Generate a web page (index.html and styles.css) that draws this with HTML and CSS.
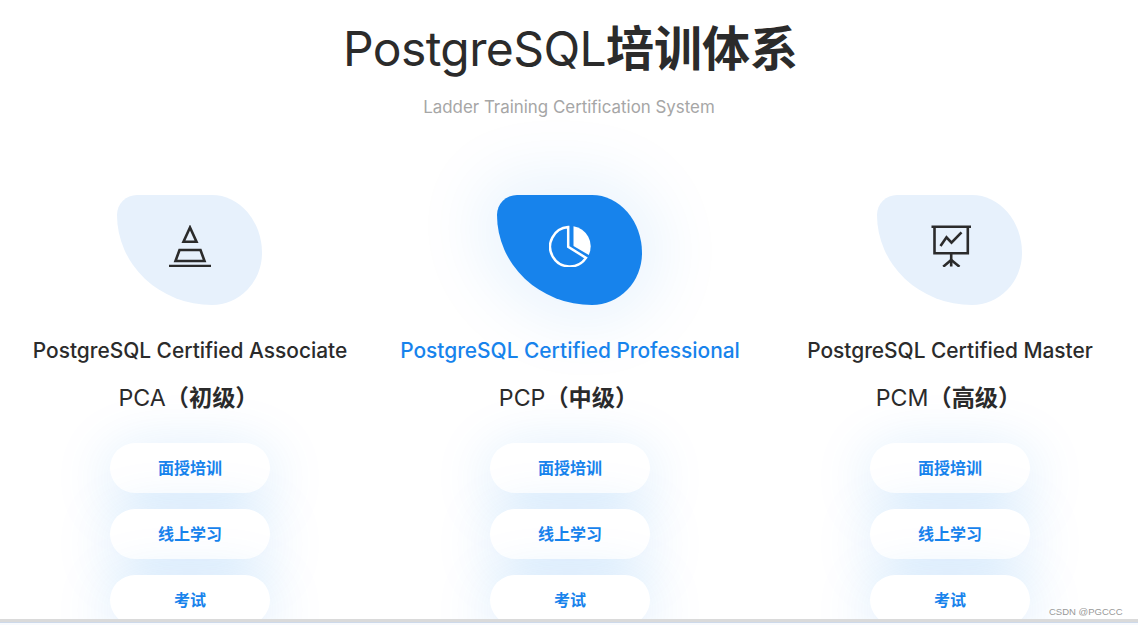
FILE: index.html
```html
<!DOCTYPE html>
<html lang="zh-CN">
<head>
<meta charset="utf-8">
<title>PostgreSQL培训体系</title>
<link rel="stylesheet" href="styles.css">
</head>
<body>
<main class="page">
  <header class="head">
    <h1 class="title"><span class="title-latin">PostgreSQL</span><b>培训体系</b></h1>
    <p class="subtitle">Ladder Training Certification System</p>
  </header>
  <section class="columns">
    <article class="col">
      <div class="blob">
        <svg class="icon" viewBox="0 0 42 42" fill="none" stroke="#2b2b2b" stroke-width="2.600"><path d="M21 2.500 L14.500 16.800 H27.500 Z"/><path d="M10.500 25 H31.500 L35.500 36 H6.500 Z"/><path d="M0 41 H42"/></svg>
      </div>
      <h2 class="name">PostgreSQL Certified Associate</h2>
      <h3 class="level">PCA<b>（初级）</b></h3>
      <div class="pills"><a class="pill">面授培训</a><a class="pill">线上学习</a><a class="pill">考试</a></div>
    </article>
    <article class="col active">
      <div class="blob">
        <svg class="icon" viewBox="0 0 42 42" fill="none" stroke="#fff" stroke-width="2.500"><path d="M19.200 2.070 A19.700 19.700 0 1 0 37 32.900 L19.200 21.700 Z"/><path d="M24.500 1.200 A20.500 20.500 0 0 1 39.800 30 L24.500 21 Z" fill="#fff" stroke="none"/></svg>
      </div>
      <h2 class="name">PostgreSQL Certified Professional</h2>
      <h3 class="level">PCP<b>（中级）</b></h3>
      <div class="pills"><a class="pill">面授培训</a><a class="pill">线上学习</a><a class="pill">考试</a></div>
    </article>
    <article class="col">
      <div class="blob">
        <svg class="icon" viewBox="0 0 42 42" fill="none" stroke="#2b2b2b" stroke-width="2.600"><path d="M2.500 1.800 H42"/><path d="M5.500 1.800 V28.300 H38.800 V1.800"/><path d="M11.500 21 L17.500 12.300 L22.500 17.700 L32.500 7.300"/><path d="M22.200 28.300 V41.500"/><path d="M14.200 41.700 L22.200 35 L30.500 41.700"/></svg>
      </div>
      <h2 class="name">PostgreSQL Certified Master</h2>
      <h3 class="level">PCM<b>（高级）</b></h3>
      <div class="pills"><a class="pill">面授培训</a><a class="pill">线上学习</a><a class="pill">考试</a></div>
    </article>
  </section>
</main>
<div class="watermark">CSDN @PGCCC</div>
<div class="bottom-rule"></div>
</body>
</html>
```
FILE: styles.css
```css
html, body {
  margin: 0;
  height: 625px;
  overflow: hidden;
  background: #fff;
}
body {
  font-family: Inter, "Noto Sans CJK SC", sans-serif;
  color: #2b2b2b;
  position: relative;
}
.page {
  width: 1138px;
  height: 619px;
  overflow: hidden;
}
.head {
  text-align: center;
}
.title {
  margin: 0;
  padding: 19px 0 0 3px;
  height: 60px;
  font-size: 48px;
  line-height: 60px;
  font-weight: 400;
}
.title-latin {
  letter-spacing: -0.6px;
}
.title b {
  font-weight: 700;
}
.subtitle {
  margin: 16px 0 0;
  font-size: 16.900px;
  line-height: 24px;
  color: #a6a6a6;
}
.columns {
  display: grid;
  grid-template-columns: repeat(3, 380px);
  margin-top: 76px;
}
.col {
  display: flex;
  flex-direction: column;
  align-items: center;
}
.blob {
  width: 145px;
  height: 110px;
  margin-right: 1px;
  background: #e7f1fc;
  border-radius: 20px 50px 50px 95px / 20px 58px 52px 90px;
  display: flex;
  align-items: center;
  justify-content: center;
}
.active .blob {
  background: #1783ec;
  box-shadow: 0 0 70px 15px rgba(23, 131, 236, 0.1);
}
.icon {
  width: 42px;
  height: 42px;
  margin-bottom: 8px;
}
.name {
  margin: 33px 0 0;
  font-size: 20.900px;
  line-height: 26px;
  font-weight: 450;
  white-space: nowrap;
}
.active .name {
  color: #1783ec;
}
.level {
  margin: 20px 0 0;
  padding-right: 3px;
  font-size: 23.200px;
  line-height: 28px;
  font-weight: 400;
}
.level b {
  font-weight: 700;
}
.pills {
  display: flex;
  flex-direction: column;
  gap: 16px;
  margin-top: 31px;
}
.pill {
  width: 160px;
  height: 50px;
  border-radius: 25px;
  background: #fff;
  color: #1783ec;
  font-size: 16px;
  font-weight: 700;
  line-height: 50px;
  text-align: center;
  box-shadow: 0 10px 60px rgba(23, 131, 236, 0.18);
}
.watermark {
  position: absolute;
  left: 1049px;
  top: 605px;
  font-family: "Liberation Sans", sans-serif;
  font-size: 9.500px;
  line-height: 13px;
  color: #999;
}
.bottom-rule {
  position: absolute;
  left: 0;
  right: 0;
  top: 619px;
  height: 6px;
  background: linear-gradient(#dadada 0 3px, #cdd9ea 3px 4px, #f8fafd 4px);
}
```
